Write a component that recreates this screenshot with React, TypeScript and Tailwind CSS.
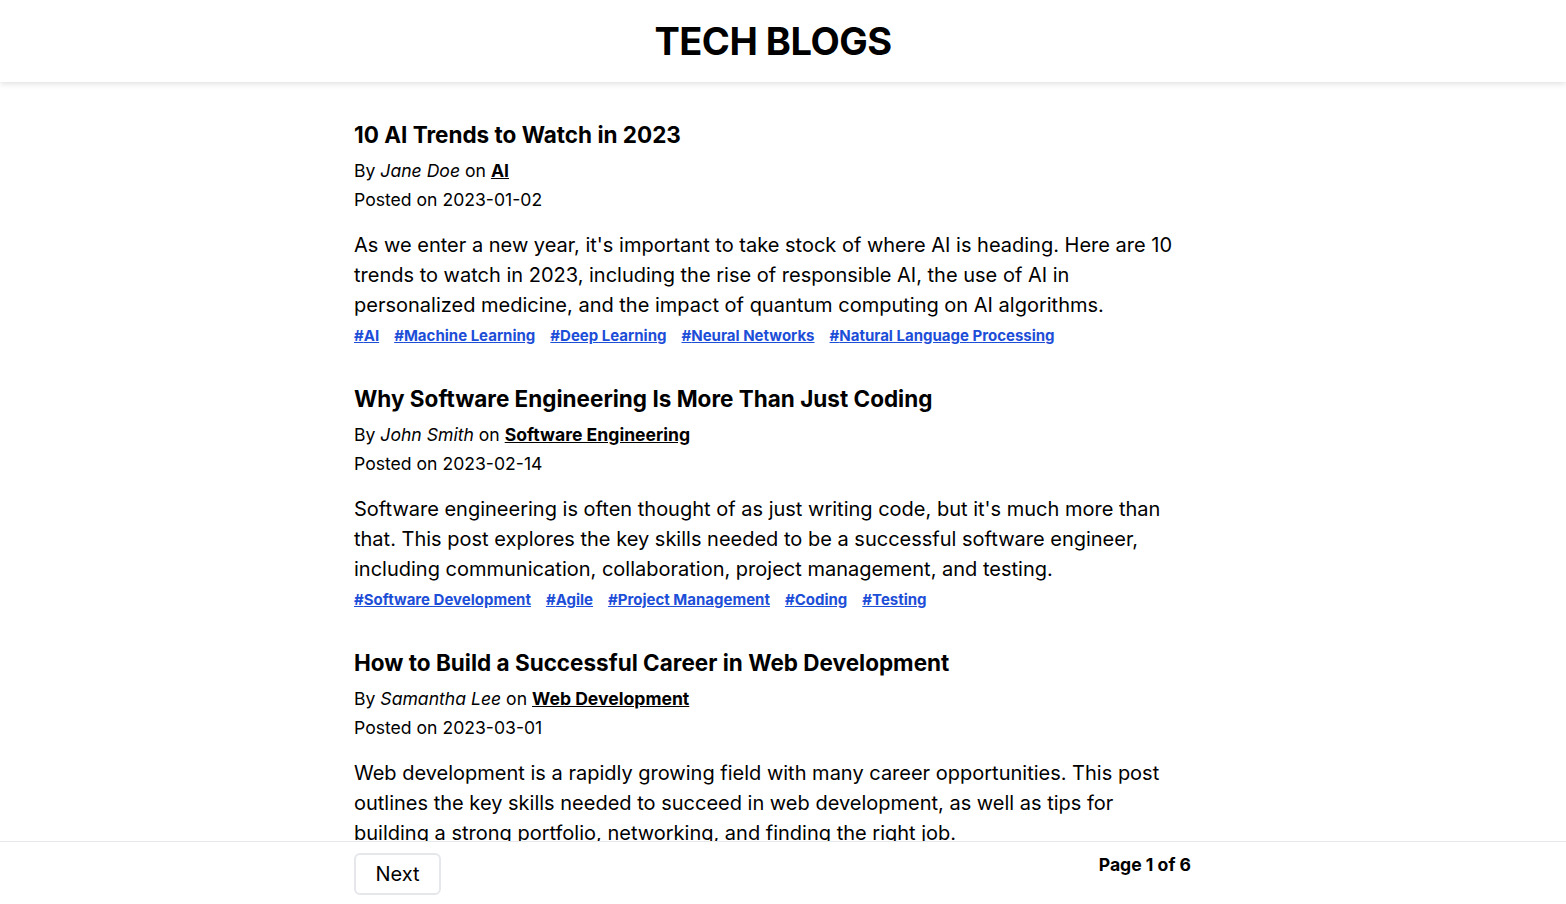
import React from "react";

interface Post {
  title: string;
  author: string;
  category: string;
  date: string;
  body: string;
  tags: string[];
}

const posts: Post[] = [
  {
    title: "10 AI Trends to Watch in 2023",
    author: "Jane Doe",
    category: "AI",
    date: "2023-01-02",
    body: "As we enter a new year, it's important to take stock of where AI is heading. Here are 10 trends to watch in 2023, including the rise of responsible AI, the use of AI in personalized medicine, and the impact of quantum computing on AI algorithms.",
    tags: ["AI", "Machine Learning", "Deep Learning", "Neural Networks", "Natural Language Processing"],
  },
  {
    title: "Why Software Engineering Is More Than Just Coding",
    author: "John Smith",
    category: "Software Engineering",
    date: "2023-02-14",
    body: "Software engineering is often thought of as just writing code, but it's much more than that. This post explores the key skills needed to be a successful software engineer, including communication, collaboration, project management, and testing.",
    tags: ["Software Development", "Agile", "Project Management", "Coding", "Testing"],
  },
  {
    title: "How to Build a Successful Career in Web Development",
    author: "Samantha Lee",
    category: "Web Development",
    date: "2023-03-01",
    body: "Web development is a rapidly growing field with many career opportunities. This post outlines the key skills needed to succeed in web development, as well as tips for building a strong portfolio, networking, and finding the right job.",
    tags: ["Web Development", "Career", "Portfolio", "Networking", "Jobs"],
  },
];

function PostCard({ post }: { post: Post }) {
  return (
    <article className="mb-[32px]">
      <h2 className="text-[22.5px] leading-[32px] font-bold text-black">{post.title}</h2>
      <p className="mt-[5px] text-[17.6px] leading-[29px] text-black">
        By <em>{post.author}</em> on{" "}
        <a href="#" className="font-bold underline">
          {post.category}
        </a>
      </p>
      <p className="text-[17.6px] leading-[29px] text-black">Posted on {post.date}</p>
      <p className="mt-[16px] text-[20px] leading-[30px] text-black">{post.body}</p>
      <div className="mt-[1px] flex flex-wrap gap-x-[15px] text-[15px] leading-[30px] font-bold">
        {post.tags.map((tag) => (
          <a key={tag} href="#" className="text-[#1d4ed8] underline">
            #{tag}
          </a>
        ))}
      </div>
    </article>
  );
}

export default function App() {
  return (
    <div className="min-h-screen bg-white" style={{ fontFamily: "Inter, 'Noto Sans', sans-serif" }}>
      {/* header */}
      <header className="h-[82px] flex items-center justify-center pr-[20px] bg-white shadow-[0_2px_6px_rgba(0,0,0,0.12)] relative z-10">
        <h1 className="text-[38px] font-bold tracking-[-0.5px] text-black">TECH BLOGS</h1>
      </header>

      {/* posts */}
      <main className="mx-auto w-[858px] pr-[22px] pt-[37px] pb-[80px]">
        {posts.map((post) => (
          <PostCard key={post.title} post={post} />
        ))}
      </main>

      {/* pagination */}
      <footer className="fixed bottom-0 left-0 right-0 h-[63px] bg-white border-t border-gray-200">
        <div className="mx-auto w-[858px] flex justify-between pr-[21px] pt-[11px]">
          <button className="h-[42px] w-[87px] rounded-md border-2 border-gray-200 text-[20px] text-black">
            Next
          </button>
          <span className="text-[17.6px] font-bold text-black leading-[24px]">Page 1 of 6</span>
        </div>
      </footer>
    </div>
  );
}
